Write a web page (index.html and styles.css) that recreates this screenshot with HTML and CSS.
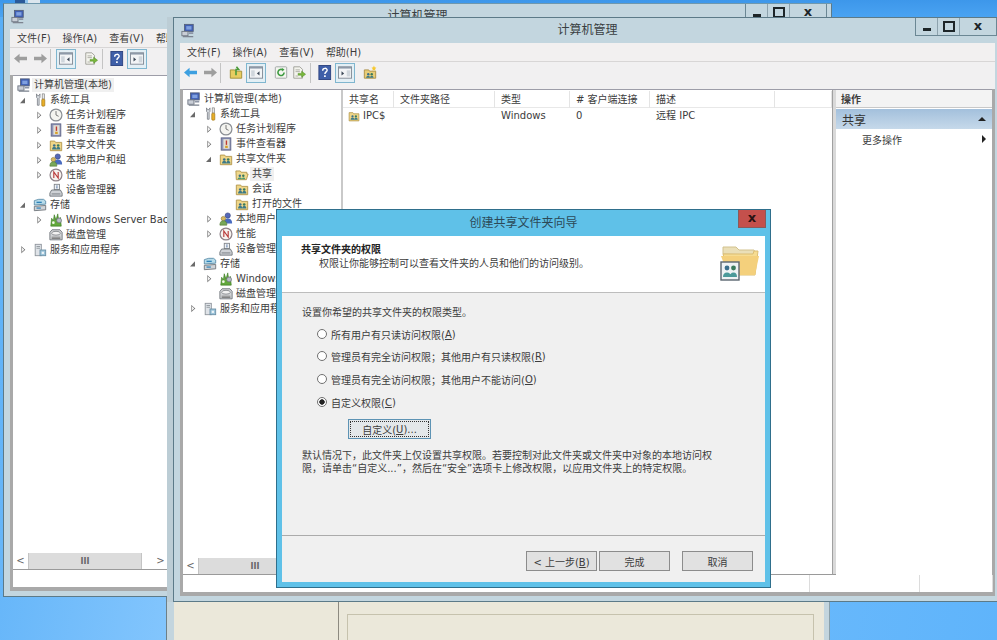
FILE: index.html
```html
<!DOCTYPE html>
<html lang="zh-CN">
<head>
    <meta charset="UTF-8">
    <meta name="viewport" content="width=device-width, initial-scale=1.0">
    <title>计算机管理</title>
    <link rel="stylesheet" href="styles.css">
</head>
<body>
    <!-- Icon set -->
    <svg class="icon-defs" xmlns="http://www.w3.org/2000/svg">
        <symbol id="i-computer" viewBox="0 0 16 16">
            <rect x="4" y="1" width="10" height="8" fill="#3f5fb5" stroke="#55607a"/>
            <rect x="6" y="3" width="6" height="4" fill="#7fa0e0"/>
            <rect x="1" y="9" width="7" height="5" fill="#c9ced6" stroke="#6d7480"/>
            <path d="M2 15h12" stroke="#7d8490" stroke-width="1.5"/>
            <path d="M9 11h5" stroke="#8d95a5" stroke-width="2"/>
        </symbol>
        <symbol id="i-tools" viewBox="0 0 16 16">
            <path d="M4 1v4l1 1v8h2V6l1-1V1L6.800 3H5.200z" fill="#d6dbe0" stroke="#6b7078" stroke-width=".8"/>
            <rect x="10.500" y="1" width="2.500" height="6" fill="#e8e8e8" stroke="#777" stroke-width=".7"/>
            <rect x="10" y="7" width="3.500" height="8" rx="1" fill="#e8ae28" stroke="#9a7010" stroke-width=".7"/>
        </symbol>
        <symbol id="i-clock" viewBox="0 0 16 16">
            <circle cx="8" cy="8" r="6.800" fill="#f4f4f0" stroke="#8b8f94" stroke-width="1.400"/>
            <path d="M8 3.500V8l3 1.500" fill="none" stroke="#6a6a6a"/>
        </symbol>
        <symbol id="i-event" viewBox="0 0 16 16">
            <rect x="2.500" y="1" width="11" height="14" fill="#8d93b8" stroke="#5d6284"/>
            <rect x="5" y="2.500" width="7" height="11" fill="#e2dfd4"/>
            <path d="M8.500 4v5" stroke="#c03a30" stroke-width="1.600"/>
            <rect x="7" y="10" width="3" height="2.500" fill="#d8a028"/>
        </symbol>
        <symbol id="i-share" viewBox="0 0 16 16">
            <path d="M1.500 3.500h5l1 1.500h7v9.500h-13z" fill="#efd688" stroke="#b09448"/>
            <circle cx="6" cy="8.500" r="1.500" fill="#3a6f8c"/>
            <circle cx="10.500" cy="8.500" r="1.500" fill="#3a7a5c"/>
            <path d="M3.500 13c0-2 1-2.700 2.500-2.700S8.500 11 8.500 13zM8.500 13c0-2 .7-2.700 2-2.700s2.500.7 2.500 2.700z" fill="#3d7a88"/>
        </symbol>
        <symbol id="i-share-open" viewBox="0 0 16 16">
            <path d="M1 4.500h5l1 1.500h6.500v2L15 8l-2 6.500H1.500z" fill="#f0d98e" stroke="#b09448"/>
            <circle cx="5.500" cy="10" r="1.400" fill="#3a6f8c"/>
            <circle cx="9.500" cy="10" r="1.400" fill="#3a7a5c"/>
            <path d="M3 14c0-1.500 1-2 2.500-2S8 12.500 8 14zM8 14c0-1.500.6-2 1.700-2s2 .5 2 2z" fill="#4c9a70"/>
        </symbol>
        <symbol id="i-users" viewBox="0 0 16 16">
            <circle cx="10" cy="4" r="3" fill="#5468b8" stroke="#3a4680" stroke-width=".7"/>
            <path d="M5.500 13c0-4 2-5.500 4.500-5.500s5 1.500 5 5.500z" fill="#4a6cc0"/>
            <circle cx="5" cy="7.500" r="2.500" fill="#d8b860" stroke="#8d7a38" stroke-width=".7"/>
            <path d="M1 15c0-3.500 1.500-5 4-5s4 1.500 4 5z" fill="#78a858" stroke="#557a3c" stroke-width=".7"/>
        </symbol>
        <symbol id="i-perf" viewBox="0 0 16 16">
            <circle cx="8" cy="8" r="6.800" fill="#f6f2ee" stroke="#8e8288" stroke-width="1.400"/>
            <path d="M5.500 11.500v-7l5 7v-7" fill="none" stroke="#b83838" stroke-width="1.300"/>
        </symbol>
        <symbol id="i-device" viewBox="0 0 16 16">
            <rect x="6" y="1.500" width="6" height="6" fill="#f0f2f4" stroke="#7d8288"/>
            <path d="M8 3.500h2M8 5.500h2" stroke="#5878a8"/>
            <path d="M3 8h10l2 3.500v3.500H1v-3.500z" fill="#cfd2d6" stroke="#6d7278"/>
            <path d="M3 12.500h10" stroke="#70757c"/>
        </symbol>
        <symbol id="i-storage" viewBox="0 0 16 16">
            <path d="M1.500 3l5-1.500H12l2.500 2V7l-13 1z" fill="#b8dcea" stroke="#5a8ca8"/>
            <path d="M1.500 9.500l13-1v5l-13 1z" fill="#d0d4d8" stroke="#6d7278"/>
            <path d="M4 5h6" stroke="#2e82b8" stroke-width="1.600"/>
            <path d="M4 11.500h5" stroke="#2e82b8" stroke-width="1.400"/>
        </symbol>
        <symbol id="i-backup" viewBox="0 0 16 16">
            <path d="M2 15l1-9 2 3 1-7 2 6 2-7 1 7 2-3 1 10z" fill="#62a83c" stroke="#3a7a22" stroke-width=".7"/>
            <circle cx="11.500" cy="8.500" r="2.800" fill="#b8bcc4" stroke="#6a7078" stroke-width=".8"/>
            <circle cx="5" cy="11" r="1.500" fill="#f4f8ec"/>
        </symbol>
        <symbol id="i-disk" viewBox="0 0 16 16">
            <path d="M3.500 2h9l2.500 3v8.500H1V5z" fill="#d2d4d6" stroke="#6d7278"/>
            <ellipse cx="8" cy="6" rx="5" ry="2.200" fill="#f2f2f2" stroke="#83878c"/>
            <path d="M3 10.500h10M3 12h10" stroke="#777"/>
        </symbol>
        <symbol id="i-services" viewBox="0 0 16 16">
            <rect x="2.500" y="1.500" width="7" height="13" fill="#dfe3e8" stroke="#8d939a"/>
            <path d="M4 4h4M4 6h4" stroke="#8d939a"/>
            <rect x="8" y="8" width="6.500" height="6.500" fill="#9cc4da" stroke="#6a8ea4"/>
            <rect x="10" y="10" width="2.500" height="2.500" fill="#eef4f8"/>
        </symbol>
        <symbol id="i-left" viewBox="0 0 16 14">
            <path d="M1 7l6-5v3h8v4H7v3z"/>
        </symbol>
        <symbol id="i-right" viewBox="0 0 16 14">
            <path d="M15 7L9 2v3H1v4h8v3z"/>
        </symbol>
        <symbol id="i-up" viewBox="0 0 16 16">
            <path d="M1.500 5h5l1 1.500h7v8h-13z" fill="#e8cc60" stroke="#9e8a30"/>
            <path d="M8 11V4.500h3L8.500 1.500 11 4.500" fill="none" stroke="#4a9a38" stroke-width="1.800"/>
        </symbol>
        <symbol id="i-tree-toggle" viewBox="0 0 16 14">
            <rect x=".5" y=".5" width="15" height="13" fill="#f2f4f6" stroke="#7d8590"/>
            <path d="M1 1.500h14" stroke="#8d99a8" stroke-width="2"/>
            <rect x="2.500" y="4.500" width="4" height="7" fill="#cfd6dc"/>
            <path d="M12 5.500L9 8l3 2.500z" fill="#3e4a58"/>
        </symbol>
        <symbol id="i-pane-toggle" viewBox="0 0 16 14">
            <rect x=".5" y=".5" width="15" height="13" fill="#f2f4f6" stroke="#7d8590"/>
            <path d="M1 1.500h14" stroke="#8d99a8" stroke-width="2"/>
            <rect x="10" y="4.500" width="4" height="7" fill="#cfd6dc"/>
            <path d="M4 5.500L7 8l-3 2.500z" fill="#3e4a58"/>
        </symbol>
        <symbol id="i-refresh" viewBox="0 0 16 16">
            <rect x="1.500" y="1.500" width="13" height="13" rx="1" fill="#f4f6f0" stroke="#9aa0a0"/>
            <path d="M11.500 8A3.500 3.500 0 1 1 10 5.100" fill="none" stroke="#3d9a40" stroke-width="1.800"/>
            <path d="M9 2.800l3 1.800-2.500 2.200z" fill="#3d9a40"/>
        </symbol>
        <symbol id="i-export" viewBox="0 0 16 16">
            <path d="M2 1.500h7l3 3v10H2z" fill="#f4f4ee" stroke="#9a9a92"/>
            <path d="M4 5h5M4 7h5M4 12h3" stroke="#a8a8a0"/>
            <path d="M7 9h4V6.500L15.500 10 11 13.500V11H7z" fill="#7ab83c" stroke="#4c8a22" stroke-width=".6"/>
        </symbol>
        <symbol id="i-help" viewBox="0 0 14 16">
            <rect x=".5" y=".5" width="12.500" height="15" fill="#3f5fa8" stroke="#2e4480"/>
            <path d="M4.500 6c0-3.200 4.800-3.200 4.800-.4 0 1.800-2.400 1.800-2.400 4" fill="none" stroke="#fff" stroke-width="1.500"/>
            <rect x="6" y="11" width="1.800" height="1.800" fill="#fff"/>
        </symbol>
        <symbol id="i-new-share" viewBox="0 0 16 16">
            <path d="M1.500 5h5l1 1.500h7v8h-13z" fill="#e8cd78" stroke="#a88c40"/>
            <circle cx="6" cy="10" r="1.400" fill="#3a6f8c"/>
            <circle cx="10" cy="10" r="1.400" fill="#3a7a5c"/>
            <path d="M3.500 14c0-1.500 1-2 2.500-2s2 .5 2 2zM8 14c0-1.500.6-2 2-2s2 .5 2 2z" fill="#3d7a88"/>
            <path d="M12.500 0l.8 2 2 .5-1.500 1.500.5 2-1.800-1-1.800 1 .5-2-1.500-1.500 2-.5z" fill="#f6c830"/>
        </symbol>
        <symbol id="i-folder-big" viewBox="0 0 40 40">
            <path d="M3 12V5h13l3 3h15l2 5z" fill="#eadfb8" stroke="#d2c28e"/>
            <path d="M3 12h30l1-3h4l-3 24H9z" fill="#f6dc92" stroke="#dcbd72"/>
            <path d="M1 14h38l-4 19H8z" fill="#f4d07c"/>
            <rect x="1" y="20" width="18" height="18" fill="#eef2f4" stroke="#5a6670" stroke-width="1.400"/>
            <circle cx="7" cy="26" r="2.400" fill="#3a6f8c"/>
            <circle cx="13.500" cy="26" r="2.400" fill="#3a7a5c"/>
            <path d="M3 35c0-3 1.500-4.500 4-4.500s4 1.500 4 4.500zM10 35c0-3 1-4.500 3.500-4.500S17 32 17 35z" fill="#4a9a9a"/>
        </symbol>
    </svg>

    <div class="desktop">
        <div class="desktop-sliver"></div>

        <!-- Beige window behind everything -->
        <div class="old-win">
            <div class="old-side"></div>
            <div class="old-main"><div class="old-panel"></div></div>
        </div>

        <!-- Back window -->
        <section class="win win-back">
            <header class="titlebar">
                <svg class="title-icon"><use href="#i-computer"/></svg>
                <div class="title-text">计算机管理</div>
                <div class="controls">
                    <span class="ctl ctl-min"></span><span class="ctl ctl-max"></span><span class="ctl ctl-close">x</span>
                </div>
            </header>
            <div class="client">
                <nav class="menubar">
                    <span>文件(F)</span><span>操作(A)</span><span>查看(V)</span><span>帮助(H)</span>
                </nav>
                <div class="toolbar">
                    <span class="tb"><svg class="tb-arrow off"><use href="#i-left"/></svg></span>
                    <span class="tb"><svg class="tb-arrow off"><use href="#i-right"/></svg></span>
                    <span class="tb-sep"></span>
                    <span class="tb tb-on ml5"><svg class="tb-icon"><use href="#i-tree-toggle"/></svg></span>
                    <span class="tb ml5"><svg class="tb-icon"><use href="#i-export"/></svg></span>
                    <span class="tb-sep ml1"></span>
                    <span class="tb ml4"><svg class="tb-icon"><use href="#i-help"/></svg></span>
                    <span class="tb tb-on"><svg class="tb-icon"><use href="#i-pane-toggle"/></svg></span>
                </div>
                <div class="panes">
                    <div class="tree-pane">
                        <ul class="tree">
                            <li class="row root"><svg class="ico"><use href="#i-computer"/></svg><span class="lbl sel">计算机管理(本地)</span></li>
                            <li class="row l1"><i class="arr open"></i><svg class="ico"><use href="#i-tools"/></svg><span class="lbl">系统工具</span></li>
                            <li class="row l2"><i class="arr"></i><svg class="ico"><use href="#i-clock"/></svg><span class="lbl">任务计划程序</span></li>
                            <li class="row l2"><i class="arr"></i><svg class="ico"><use href="#i-event"/></svg><span class="lbl">事件查看器</span></li>
                            <li class="row l2"><i class="arr"></i><svg class="ico"><use href="#i-share"/></svg><span class="lbl">共享文件夹</span></li>
                            <li class="row l2"><i class="arr"></i><svg class="ico"><use href="#i-users"/></svg><span class="lbl">本地用户和组</span></li>
                            <li class="row l2"><i class="arr"></i><svg class="ico"><use href="#i-perf"/></svg><span class="lbl">性能</span></li>
                            <li class="row l2"><i class="arr none"></i><svg class="ico"><use href="#i-device"/></svg><span class="lbl">设备管理器</span></li>
                            <li class="row l1"><i class="arr open"></i><svg class="ico"><use href="#i-storage"/></svg><span class="lbl">存储</span></li>
                            <li class="row l2"><i class="arr"></i><svg class="ico"><use href="#i-backup"/></svg><span class="lbl">Windows Server Backup</span></li>
                            <li class="row l2"><i class="arr none"></i><svg class="ico"><use href="#i-disk"/></svg><span class="lbl">磁盘管理</span></li>
                            <li class="row l1"><i class="arr"></i><svg class="ico"><use href="#i-services"/></svg><span class="lbl">服务和应用程序</span></li>
                        </ul>
                        <div class="hscroll">
                            <span class="sb-btn">&lt;</span>
                            <span class="sb-thumb">III</span>
                            <span class="sb-rest"></span>
                            <span class="sb-btn">&gt;</span>
                        </div>
                    </div>
                </div>
                <div class="status"></div>
            </div>
        </section>

        <!-- Front window -->
        <section class="win win-front">
            <header class="titlebar">
                <svg class="title-icon"><use href="#i-computer"/></svg>
                <div class="title-text">计算机管理</div>
                <div class="controls">
                    <span class="ctl ctl-min"></span><span class="ctl ctl-max"></span><span class="ctl ctl-close">x</span>
                </div>
            </header>
            <div class="client">
                <nav class="menubar">
                    <span>文件(F)</span><span>操作(A)</span><span>查看(V)</span><span>帮助(H)</span>
                </nav>
                <div class="toolbar">
                    <span class="tb"><svg class="tb-arrow blue"><use href="#i-left"/></svg></span>
                    <span class="tb"><svg class="tb-arrow off"><use href="#i-right"/></svg></span>
                    <span class="tb-sep"></span>
                    <span class="tb ml5"><svg class="tb-icon"><use href="#i-up"/></svg></span>
                    <span class="tb tb-on"><svg class="tb-icon"><use href="#i-tree-toggle"/></svg></span>
                    <span class="tb ml5"><svg class="tb-icon"><use href="#i-refresh"/></svg></span>
                    <span class="tb mln2"><svg class="tb-icon"><use href="#i-export"/></svg></span>
                    <span class="tb-sep ml1"></span>
                    <span class="tb ml4"><svg class="tb-icon"><use href="#i-help"/></svg></span>
                    <span class="tb tb-on"><svg class="tb-icon"><use href="#i-pane-toggle"/></svg></span>
                    <span class="tb ml5"><svg class="tb-icon"><use href="#i-new-share"/></svg></span>
                </div>
                <div class="panes">
                    <div class="tree-pane">
                        <ul class="tree">
                            <li class="row root"><svg class="ico"><use href="#i-computer"/></svg><span class="lbl">计算机管理(本地)</span></li>
                            <li class="row l1"><i class="arr open"></i><svg class="ico"><use href="#i-tools"/></svg><span class="lbl">系统工具</span></li>
                            <li class="row l2"><i class="arr"></i><svg class="ico"><use href="#i-clock"/></svg><span class="lbl">任务计划程序</span></li>
                            <li class="row l2"><i class="arr"></i><svg class="ico"><use href="#i-event"/></svg><span class="lbl">事件查看器</span></li>
                            <li class="row l2"><i class="arr open"></i><svg class="ico"><use href="#i-share"/></svg><span class="lbl">共享文件夹</span></li>
                            <li class="row l3"><i class="arr none"></i><svg class="ico"><use href="#i-share-open"/></svg><span class="lbl sel">共享</span></li>
                            <li class="row l3"><i class="arr none"></i><svg class="ico"><use href="#i-share"/></svg><span class="lbl">会话</span></li>
                            <li class="row l3"><i class="arr none"></i><svg class="ico"><use href="#i-share"/></svg><span class="lbl">打开的文件</span></li>
                            <li class="row l2"><i class="arr"></i><svg class="ico"><use href="#i-users"/></svg><span class="lbl">本地用户和组</span></li>
                            <li class="row l2"><i class="arr"></i><svg class="ico"><use href="#i-perf"/></svg><span class="lbl">性能</span></li>
                            <li class="row l2"><i class="arr none"></i><svg class="ico"><use href="#i-device"/></svg><span class="lbl">设备管理器</span></li>
                            <li class="row l1"><i class="arr open"></i><svg class="ico"><use href="#i-storage"/></svg><span class="lbl">存储</span></li>
                            <li class="row l2"><i class="arr"></i><svg class="ico"><use href="#i-backup"/></svg><span class="lbl">Windows Server Backup</span></li>
                            <li class="row l2"><i class="arr none"></i><svg class="ico"><use href="#i-disk"/></svg><span class="lbl">磁盘管理</span></li>
                            <li class="row l1"><i class="arr"></i><svg class="ico"><use href="#i-services"/></svg><span class="lbl">服务和应用程序</span></li>
                        </ul>
                        <div class="hscroll">
                            <span class="sb-btn">&lt;</span>
                            <span class="sb-thumb">III</span>
                            <span class="sb-rest"></span>
                            <span class="sb-btn">&gt;</span>
                        </div>
                    </div>
                    <div class="split"></div>
                    <div class="list-pane">
                        <div class="list-row list-head">
                            <span>共享名</span><span>文件夹路径</span><span>类型</span><span># 客户端连接</span><span>描述</span><span></span>
                        </div>
                        <div class="list-row">
                            <span class="share-name"><svg class="ico-sm"><use href="#i-share"/></svg>IPC$</span><span></span><span>Windows</span><span>0</span><span>远程 IPC</span><span></span>
                        </div>
                    </div>
                    <div class="split split-wide"></div>
                    <aside class="actions">
                        <div class="act-head">操作</div>
                        <div class="act-band"><span>共享</span><i class="tri-up"></i></div>
                        <div class="act-item"><span>更多操作</span><i class="tri-right"></i></div>
                    </aside>
                </div>
                <div class="status status-cols"><span></span><span></span><span></span></div>
            </div>
        </section>

        <!-- Wizard -->
        <section class="dialog">
            <header class="dlg-title">
                创建共享文件夹向导
                <span class="dlg-close">x</span>
            </header>
            <div class="dlg-inner">
                <div class="dlg-head">
                    <div>
                        <h2>共享文件夹的权限</h2>
                        <p>权限让你能够控制可以查看文件夹的人员和他们的访问级别。</p>
                    </div>
                    <svg class="dlg-folder"><use href="#i-folder-big"/></svg>
                </div>
                <div class="dlg-body">
                    <p class="dlg-intro">设置你希望的共享文件夹的权限类型。</p>
                    <div class="radios">
                        <label><input type="radio" name="perm">所有用户有只读访问权限(<u>A</u>)</label>
                        <label class="tight"><input type="radio" name="perm">管理员有完全访问权限；其他用户有只读权限(<u>R</u>)</label>
                        <label><input type="radio" name="perm">管理员有完全访问权限；其他用户不能访问(<u>O</u>)</label>
                        <label><input type="radio" name="perm" checked>自定义权限(<u>C</u>)</label>
                    </div>
                    <button class="btn btn-custom" type="button"><span>自定义(<u>U</u>)...</span></button>
                    <p class="dlg-note">默认情况下，此文件夹上仅设置共享权限。若要控制对此文件夹或文件夹中对象的本地访问权<br>限，请单击“自定义...”，然后在“安全”选项卡上修改权限，以应用文件夹上的特定权限。</p>
                </div>
                <div class="dlg-foot">
                    <button class="btn" type="button">&lt; 上一步(<u>B</u>)</button>
                    <button class="btn" type="button">完成</button>
                    <button class="btn btn-cancel" type="button">取消</button>
                </div>
            </div>
        </section>
    </div>
</body>
</html>
```

FILE: styles.css
```css
* {
    box-sizing: border-box;
}
html, body {
    margin: 0;
    padding: 0;
}
body {
    font-family: "DejaVu Sans", "Noto Sans CJK SC", sans-serif;
    font-size: 10px;
    color: #3c3c3c;
}
p, h2, ul {
    margin: 0;
    padding: 0;
}
.icon-defs {
    display: none;
}

/* Desktop */
.desktop {
    position: relative;
    width: 997px;
    height: 640px;
    overflow: hidden;
    background:
        linear-gradient(#3d97ea 0, #4aa3f2 17px, rgba(74, 163, 242, 0) 17px),
        linear-gradient(100deg, #57aef7 0%, #82c5fd 25%, #5fb4fb 100%);
}
.desktop-sliver {
    position: absolute;
    left: 15px;
    top: 0;
    width: 25px;
    height: 3px;
    background: linear-gradient(90deg, #2a5a9a 0 40%, #8fc4ee 40% 52%, #dbe6ee 52%);
}

/* Windows */
.win {
    position: absolute;
    display: flex;
    flex-direction: column;
    width: 829px;
    padding: 0 6px 5px;
    background: #c3d6df;
    border: 1px solid #5c7a88;
}
.win-back {
    left: 3px;
    top: 3px;
    height: 594px;
    border-top-color: #6f98ad;
}
.win-front {
    left: 173px;
    top: 17px;
    height: 585px;
    box-shadow: -6px 0 0 #bccdd5;
}
.titlebar {
    display: grid;
    grid-template-columns: 1fr auto 1fr;
    align-items: start;
    height: 25px;
    flex: none;
}
.title-icon {
    width: 14px;
    height: 15px;
    margin: 5px 0 0 1px;
}
.title-text {
    font-size: 12px;
    line-height: 25px;
    color: #3a3f42;
}
.controls {
    display: flex;
    justify-self: end;
    height: 18px;
    margin-right: -2px;
    border: 1px solid #6b8794;
    border-top: 0;
}
.ctl {
    display: flex;
    align-items: center;
    justify-content: center;
    width: 22px;
    border-right: 1px solid #8da2ad;
}
.ctl-min::before {
    content: "";
    width: 8px;
    height: 3px;
    margin-top: 6px;
    background: #1d2528;
}
.ctl-max::before {
    content: "";
    width: 8px;
    height: 7px;
    border: 2px solid #1d2528;
}
.ctl-close {
    width: 36px;
    border-right: 0;
    font-size: 13px;
    font-weight: bold;
    color: #1d2528;
    line-height: 1;
    padding-bottom: 2px;
}
.client {
    flex: 1;
    display: flex;
    flex-direction: column;
    min-height: 0;
    background: #a9a9a9;
    padding-bottom: 4px;
}
.menubar {
    display: flex;
    flex: none;
    height: 19px;
    align-items: center;
    padding: 0 0 1px 1px;
    background: #f2f0f0;
    border-bottom: 1px solid #d8d6d6;
    white-space: nowrap;
}
.menubar span {
    padding: 0 6px;
}
.toolbar {
    display: flex;
    flex: none;
    height: 27px;
    align-items: center;
    padding-bottom: 6px;
    background: #f1f0f1;
}
.tb {
    display: flex;
    align-items: center;
    justify-content: center;
    width: 20px;
    height: 20px;
}
.tb-on {
    border: 1px solid #7fb6cf;
    background: #e3eff5;
}
.tb-arrow {
    width: 15px;
    height: 13px;
}
.tb-arrow.off {
    fill: #9e9e9e;
}
.tb-arrow.blue {
    fill: #3d9fe0;
}
.tb-icon {
    width: 14px;
    height: 15px;
}
.tb-sep {
    width: 1px;
    height: 20px;
    background: #c4c4c4;
}
.ml1 { margin-left: 1px; }
.ml4 { margin-left: 4px; }
.ml5 { margin-left: 5px; }
.mln2 { margin-left: -2px; }

.panes {
    flex: 1;
    display: flex;
    min-height: 0;
    margin: 0 3px;
    background: #fff;
    border-top: 1px solid #9d9da8;
}
.win-back .panes {
    background: #c3d6df;
}
.tree-pane {
    display: flex;
    flex-direction: column;
    flex: none;
    width: 158px;
    min-height: 0;
    background: #fff;
    border-bottom: 1px solid #9a9a9a;
}
.win-back .tree-pane {
    width: 155px;
}
.tree {
    flex: 1;
    list-style: none;
    overflow: hidden;
    padding-top: 2px;
}

/* Tree rows */
.row {
    display: flex;
    align-items: center;
    height: 14.95px;
    white-space: nowrap;
}
.root { padding-left: 4px; }
.l1 { padding-left: 5px; }
.l2 { padding-left: 21px; }
.l3 { padding-left: 37px; }
.arr {
    flex: none;
    width: 10px;
    height: 8px;
    margin-right: 5px;
    background: #fff;
    clip-path: polygon(32% 0, 76% 50%, 32% 100%);
    position: relative;
}
.arr::before {
    content: "";
    position: absolute;
    inset: 0;
    background: #7a7a7a;
    clip-path: polygon(32% 0, 76% 50%, 32% 100%, 32% 84%, 62% 50%, 41% 22%, 41% 78%, 32% 84%);
}
.arr.open {
    background: #6a6a6a;
    clip-path: polygon(70% 18%, 70% 85%, 20% 85%);
}
.arr.open::before {
    display: none;
}
.arr.none {
    visibility: hidden;
}
.ico {
    flex: none;
    width: 14px;
    height: 14px;
    margin-right: 1px;
}
.lbl {
    padding: 0 2px;
    line-height: 14px;
}
.lbl.sel {
    background: #f0f0f0;
}

/* Horizontal scrollbar */
.hscroll {
    display: flex;
    flex: none;
    height: 17px;
    color: #666;
    background: #fff;
}
.sb-btn {
    display: flex;
    align-items: center;
    justify-content: center;
    flex: none;
    width: 15px;
    font-size: 10px;
}
.sb-thumb {
    display: flex;
    align-items: center;
    justify-content: center;
    flex: none;
    width: 114px;
    margin-top: 1px;
    background: #dcdcdc;
    border-left: 1px solid #c4c4c4;
    border-right: 1px solid #c4c4c4;
    font-size: 8px;
    font-weight: bold;
}
.sb-rest {
    flex: 1;
}
.split {
    flex: none;
    width: 2px;
    background: #c9c9c9;
    border-bottom: 1px solid #999;
}
.split-wide {
    width: 4px;
    background: #d9d9d9;
    border-left: 1px solid #a0a0a0;
}

/* Share list */
.list-pane {
    flex: 1;
    min-width: 0;
    padding-top: 1px;
    background: #fff;
    border-bottom: 1px solid #9a9a9a;
}
.list-row {
    display: grid;
    grid-template-columns: 51px 101px 75px 80px 125px 1fr;
    height: 15px;
    line-height: 15px;
    white-space: nowrap;
}
.list-row span {
    padding-left: 6px;
}
.list-head {
    height: 17px;
    line-height: 17px;
    border-bottom: 1px solid #e8e8e8;
}
.list-head span {
    border-right: 1px solid #e4e4e4;
}
.share-name {
    display: flex;
    align-items: center;
}
.ico-sm {
    flex: none;
    width: 12px;
    height: 12px;
    margin: 0 3px 0 -1px;
}

/* Actions pane */
.actions {
    flex: none;
    width: 156px;
    background: #fff;
}
.act-head {
    height: 18px;
    line-height: 18px;
    padding: 1px 0 0 5px;
    font-weight: bold;
    background: #f3f3f3;
    border-bottom: 1px solid #c8c8c8;
}
.act-band {
    display: flex;
    align-items: center;
    justify-content: space-between;
    height: 20px;
    margin-top: 1px;
    padding: 0 4px 0 6px;
    font-size: 12px;
    color: #333;
    background: linear-gradient(#a3c0dc, #c6d9ea);
}
.tri-up {
    width: 0;
    height: 0;
    border-left: 4px solid transparent;
    border-right: 4px solid transparent;
    border-bottom: 4px solid #222;
    margin-right: 2px;
}
.act-item {
    display: flex;
    align-items: center;
    justify-content: space-between;
    height: 20px;
    padding: 0 6px 0 26px;
}
.tri-right {
    width: 0;
    height: 0;
    border-top: 4px solid transparent;
    border-bottom: 4px solid transparent;
    border-left: 4px solid #222;
}
.status {
    flex: none;
    height: 17px;
    margin: 0 3px;
    background: #fff;
}
.status-cols {
    display: grid;
    grid-template-columns: 627px 110px 73px;
}
.status-cols span {
    border-right: 1px solid #dcdcdc;
}

/* Beige window at the bottom */
.old-win {
    position: absolute;
    left: 166px;
    top: 590px;
    display: flex;
    width: 664px;
    height: 60px;
    padding: 0 5px 0 7px;
    background: #c3d5de;
    border-left: 1px solid #6d8088;
    border-right: 1px solid #8aa0ab;
}
.old-side {
    width: 165px;
    background: #ebe8da;
    border-right: 1px solid #8d8a80;
}
.old-main {
    flex: 1;
    padding: 24px 10px 0 8px;
    background: #ebe8da;
}
.old-panel {
    height: 100%;
    border: 1px solid #c6c2ad;
    border-bottom: 0;
}

/* Wizard dialog */
.dialog {
    position: absolute;
    left: 276px;
    top: 209px;
    display: flex;
    flex-direction: column;
    width: 495px;
    height: 379px;
    padding: 0 5px 5px;
    background: #5fc1e8;
    border: 1px solid #2f6f8c;
}
.dlg-title {
    position: relative;
    flex: none;
    height: 26px;
    line-height: 27px;
    text-align: center;
    font-size: 12px;
    color: #2c4a58;
}
.dlg-close {
    position: absolute;
    right: -1px;
    top: 0;
    width: 28px;
    height: 18px;
    line-height: 16px;
    background: #c4504c;
    border: 1px solid #8a5a5a;
    border-top: 0;
    font-size: 13px;
    font-weight: bold;
    color: #2a1212;
}
.dlg-inner {
    flex: 1;
    display: flex;
    flex-direction: column;
    min-height: 0;
    background: #f0f0f0;
}
.dlg-head {
    display: flex;
    justify-content: space-between;
    flex: none;
    height: 57px;
    padding: 7px 5px 0 19px;
    background: #fff;
    border-bottom: 1px solid #bdbdbd;
}
.dlg-head h2 {
    font-size: 10px;
    line-height: 14px;
    font-weight: bold;
    color: #222;
}
.dlg-head p {
    padding-left: 18px;
    line-height: 13px;
}
.dlg-folder {
    width: 40px;
    height: 40px;
    margin-top: -1px;
}
.dlg-body {
    flex: 1;
    padding: 13px 0 0 20px;
    border-bottom: 1px solid #ababab;
}
.dlg-intro {
    line-height: 14px;
    margin-bottom: 7px;
}
.radios {
    display: flex;
    flex-direction: column;
    gap: 9px;
    padding-left: 15px;
}
.radios label {
    display: flex;
    align-items: center;
    height: 14px;
    white-space: nowrap;
}
.radios .tight {
    margin-top: -1px;
}
.radios input {
    appearance: none;
    flex: none;
    width: 10px;
    height: 10px;
    margin: 0 4px 0 0;
    background: #fff;
    border: 1px solid #707070;
    border-radius: 50%;
}
.radios input:checked {
    background: radial-gradient(circle, #222 0 2.400px, #fff 3px);
}
.btn {
    width: 71px;
    height: 20px;
    padding: 0;
    font: inherit;
    color: #3c3c3c;
    background: #e1e1e1;
    border: 1px solid #8c8c8c;
}
.btn-custom {
    display: block;
    width: 83px;
    margin: 10px 0 0 46px;
    padding: 1px;
    background: #e4e8ea;
    border-color: #5d93b4;
}
.btn-custom span {
    display: flex;
    align-items: center;
    justify-content: center;
    height: 100%;
    border: 1px dotted #333;
}
.dlg-note {
    margin-top: 10px;
    line-height: 13px;
    white-space: nowrap;
}
.dlg-foot {
    display: flex;
    justify-content: flex-end;
    flex: none;
    height: 46px;
    gap: 2px;
    padding: 15px 12px 0 0;
}
.btn-cancel {
    margin-left: 10px;
}
```
